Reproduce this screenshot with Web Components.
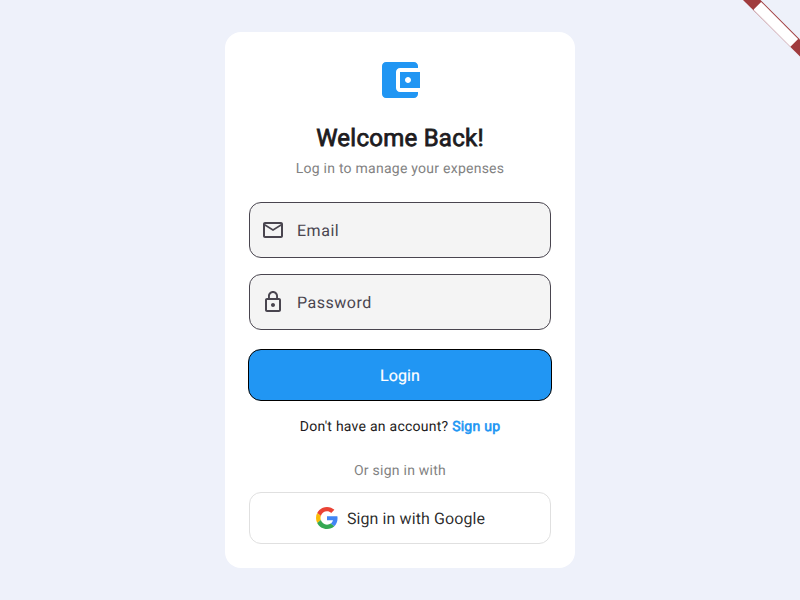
<!DOCTYPE html>
<html lang="en">
<head>
<meta charset="utf-8">
<title>Login</title>
<style>
html,body{margin:0;height:100%}
body{background:#eef1fa;font-family:Roboto,sans-serif;color:#1d1b20;overflow:hidden;text-rendering:geometricPrecision}
</style>
</head>
<body>
<login-page></login-page>
<script>
const define=(name,html)=>{
  const t=document.createElement('template');
  t.innerHTML=html;
  customElements.define(name,class extends HTMLElement{
    constructor(){super();this.attachShadow({mode:'open'}).append(t.content.cloneNode(true));}
  });
};

define('wallet-logo',`<style>:host{display:block;width:48px;height:48px;color:#2196f3}svg{display:block}</style>
<svg width="48" height="48" viewBox="0 0 24 24" fill="currentColor"><path d="M21 18v1c0 1.1-.9 2-2 2H5c-1.11 0-2-.9-2-2V5c0-1.1.89-2 2-2h14c1.1 0 2 .9 2 2v1h-9c-1.11 0-2 .9-2 2v8c0 1.1.89 2 2 2h9zm-9-2h10V8H12v8zm4-2.5c-.83 0-1.5-.67-1.5-1.5s.67-1.5 1.5-1.5 1.5.67 1.5 1.5-.67 1.5-1.5 1.5z"/></svg>`);

define('mail-icon',`<style>:host{display:block;width:24px;height:24px}svg{display:block}</style>
<svg width="24" height="24" viewBox="0 0 24 24" fill="currentColor"><path d="M22 6c0-1.1-.9-2-2-2H4c-1.1 0-2 .9-2 2v12c0 1.1.9 2 2 2h16c1.1 0 2-.9 2-2V6zm-2 0l-8 5-8-5h16zm0 12H4V8l8 5 8-5v10z"/></svg>`);

define('lock-icon',`<style>:host{display:block;width:24px;height:24px}svg{display:block}</style>
<svg width="24" height="24" viewBox="0 0 24 24" fill="currentColor"><path d="M12 17c1.1 0 2-.9 2-2s-.9-2-2-2-2 .9-2 2 .9 2 2 2zm6-9h-1V6c0-2.76-2.24-5-5-5S7 3.24 7 6v2H6c-1.1 0-2 .9-2 2v10c0 1.1.9 2 2 2h12c1.1 0 2-.9 2-2V10c0-1.1-.9-2-2-2zM8.900 6c0-1.710 1.390-3.100 3.100-3.100s3.100 1.390 3.100 3.100v2H8.900V6zM18 20H6V10h12v10z"/></svg>`);

define('google-icon',`<style>:host{display:block;width:22px;height:22px}svg{display:block}</style>
<svg width="22" height="22" viewBox="0 0 48 48"><path fill="#ea4335" d="M24 9.500c3.540 0 6.710 1.220 9.210 3.600l6.850-6.850C35.900 2.380 30.470 0 24 0 14.620 0 6.510 5.380 2.560 13.220l7.980 6.190C12.430 13.720 17.740 9.500 24 9.500z"/><path fill="#4285f4" d="M46.980 24.550c0-1.570-.15-3.090-.38-4.550H24v9.020h12.940c-.58 2.960-2.260 5.480-4.780 7.180l7.730 6c4.510-4.180 7.090-10.360 7.090-17.650z"/><path fill="#fbbc05" d="M10.530 28.590c-.48-1.450-.76-2.990-.76-4.590s.27-3.140.76-4.590l-7.980-6.190C.92 16.460 0 20.120 0 24s.92 7.540 2.560 10.780l7.970-6.190z"/><path fill="#34a853" d="M24 48c6.480 0 11.930-2.130 15.890-5.810l-7.730-6c-2.150 1.450-4.920 2.300-8.160 2.300-6.260 0-11.570-4.220-13.470-9.910l-7.980 6.190C6.510 42.620 14.620 48 24 48z"/></svg>`);

define('input-field',`<style>
:host{display:flex;align-items:center;gap:12px;box-sizing:border-box;height:56px;padding:0 11px;border:1px solid #49454f;border-radius:12px;background:#f4f4f4;color:#49454f;font-size:16px;line-height:24px;letter-spacing:.52px}
span{padding-top:2px}
</style><slot name="icon"></slot><span><slot></slot></span>`);

define('primary-button',`<style>
:host{display:flex;align-items:center;justify-content:center;box-sizing:border-box;height:52px;margin:0 -1px;border:1px solid #000;border-radius:13px;background:#2196f3;color:#fff;font-size:16px;line-height:24px;letter-spacing:.1px;-webkit-text-stroke:.2px #fff}
span{padding-top:2px}
</style><span><slot></slot></span>`);

define('google-button',`<style>
:host{display:flex;align-items:center;justify-content:center;gap:9px;box-sizing:border-box;height:52px;padding-left:1px;border:1px solid #e0e0e0;border-radius:12px;color:rgba(0,0,0,.84);font-size:16px;line-height:24px;letter-spacing:.1px}
span{padding-top:2px}
</style><google-icon></google-icon><span><slot></slot></span>`);

define('corner-ribbon',`<style>:host{position:absolute;top:0;right:0;width:60px;height:60px}svg{display:block}</style>
<svg width="60" height="60" viewBox="0 0 60 60"><path fill="#a03c3e" d="M3 0H20.500L60 39.500V56.500Z"/><path fill="#fff" d="M21.100 1.900L58.100 38.900 50.600 46.400 13.600 9.400Z"/><path stroke="#e8d6db" fill="none" d="M14 10L50.500 46.500"/></svg>`);

define('login-card',`<style>
:host{display:flex;flex-direction:column;box-sizing:border-box;width:350px;height:536px;padding:24px;border-radius:16px;background:#fff}
wallet-logo{align-self:center}
h1,p{margin:0;text-align:center;white-space:nowrap}
h1{margin-top:18px;font-size:24px;line-height:32px;font-weight:400;letter-spacing:.25px;-webkit-text-stroke:.8px #1d1b20}
.sub{margin-top:5px;font-size:14px;line-height:20px;letter-spacing:.25px;color:#828282}
.email{margin-top:23px}.pass{margin-top:16px}
primary-button{margin-top:19px}
.signup{margin-top:16px;font-size:14px;line-height:20px;letter-spacing:.25px}
b{font-weight:400;color:#2196f3;-webkit-text-stroke:.6px #2196f3}
.or{margin-top:24px;font-size:14px;line-height:20px;letter-spacing:.25px;color:#828282}
google-button{margin-top:11px}
</style>
<wallet-logo></wallet-logo>
<h1>Welcome Back!</h1>
<p class="sub">Log in to manage your expenses</p>
<input-field class="email"><mail-icon slot="icon"></mail-icon>Email</input-field>
<input-field class="pass"><lock-icon slot="icon"></lock-icon>Password</input-field>
<primary-button>Login</primary-button>
<p class="signup">Don't have an account? <b>Sign up</b></p>
<p class="or">Or sign in with</p>
<google-button>Sign in with Google</google-button>`);

define('login-page',`<style>:host{display:flex;align-items:center;justify-content:center;position:relative;height:100vh;overflow:hidden}</style>
<login-card></login-card><corner-ribbon></corner-ribbon>`);
</script>
</body>
</html>
